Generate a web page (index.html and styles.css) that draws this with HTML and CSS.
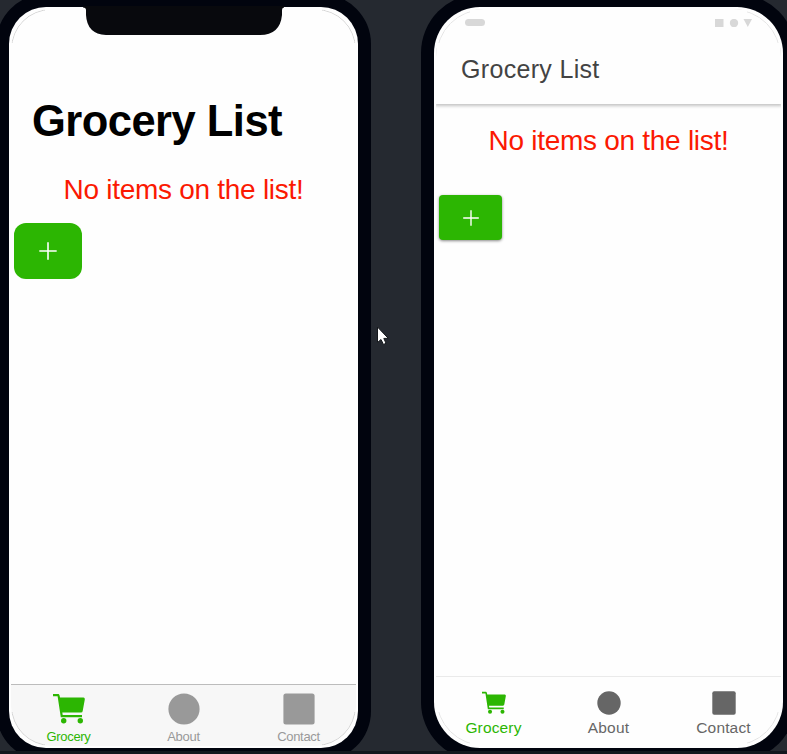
FILE: index.html
```html
<!DOCTYPE html>
<html lang="en">
<head>
<meta charset="utf-8">
<title>Grocery List</title>
<link rel="stylesheet" href="styles.css">
</head>
<body>
<main class="stage">
  <section class="phone ios">
    <div class="notch"><svg width="203" height="28" viewBox="0 0 203 28"><path d="M1-1H202V.6Q200 .8 200 3V8Q198 28 178 28H24Q5 27 4 8V3Q4 .8 1 .6Z" fill="#08090d"/></svg></div>
    <div class="screen">
      <h1 class="title">Grocery List</h1>
      <p class="message">No items on the list!</p>
      <button class="add" aria-label="Add"><svg width="18" height="18" viewBox="0 0 18 18"><path d="M9 .3V17.7M.3 9H17.7" stroke="#fff" stroke-width="1.6"/></svg></button>
      <nav class="tabs">
        <a class="tab active"><svg class="icon" viewBox="0 0 32 32"><path d="M0 1H5.5Q6.5 1 7 4.5H30.5Q32 4.700 31.800 6.500L29.700 18Q29.500 19.500 28 19.500H9.300L9.700 22H29V24.200H7.800L4.600 3.300H0Z"/><circle cx="10.700" cy="27.700" r="2.700"/><circle cx="27.300" cy="27.700" r="2.700"/></svg><span>Grocery</span></a>
        <a class="tab"><svg class="icon" viewBox="0 0 32 32"><circle cx="16" cy="16" r="15.6"/></svg><span>About</span></a>
        <a class="tab"><svg class="icon" viewBox="0 0 32 32"><rect x=".4" y=".4" width="31.2" height="31.2" rx="2.5"/></svg><span>Contact</span></a>
      </nav>
    </div>
  </section>
  <section class="phone android">
    <div class="screen">
      <header class="header">
        <div class="status"><i class="pill"></i><svg width="38" height="8" viewBox="0 0 38 8"><path d="M0 0H8.5V8H0ZM28.5 0H37L32.8 8Z"/><circle cx="19" cy="4" r="4.2"/></svg></div>
        <h1 class="title">Grocery List</h1>
      </header>
      <p class="message">No items on the list!</p>
      <button class="add" aria-label="Add"><svg width="16" height="16" viewBox="0 0 16 16"><path d="M8 .2V15.8M.2 8H15.8" stroke="#fff" stroke-width="1.4"/></svg></button>
      <nav class="tabs">
        <a class="tab active"><svg class="icon" viewBox="0 0 32 32"><path d="M0 1H5.5Q6.5 1 7 4.5H30.5Q32 4.700 31.800 6.500L29.700 18Q29.500 19.500 28 19.500H9.300L9.700 22H29V24.200H7.800L4.600 3.300H0Z"/><circle cx="10.700" cy="27.700" r="2.700"/><circle cx="27.300" cy="27.700" r="2.700"/></svg><span>Grocery</span></a>
        <a class="tab"><svg class="icon" viewBox="0 0 32 32"><circle cx="16" cy="16" r="15.6"/></svg><span>About</span></a>
        <a class="tab"><svg class="icon" viewBox="0 0 32 32"><rect x=".4" y=".4" width="31.2" height="31.2" rx="2.5"/></svg><span>Contact</span></a>
      </nav>
    </div>
  </section>
</main>
<div class="edge"></div>
<svg class="cursor" width="12" height="20" viewBox="0 0 12 20"><path d="M.5 1V16.5L4 13.5L6.5 18.5L9 17.3L6.8 12.4H11.3Z" fill="#fff" stroke="#15181c"/></svg>
</body>
</html>
```
FILE: styles.css
```css
* { box-sizing: border-box; }
body {
  margin: 0;
  height: 754px;
  overflow: hidden;
  position: relative;
  background: #252930;
  font-family: "Liberation Sans", Arial, sans-serif;
}
h1, p { margin: 0; white-space: nowrap; }
.stage { display: flex; gap: 76px; padding: 7px 0 0 9px; }
.phone {
  position: relative;
  flex: none;
  width: 349px;
  height: 741px;
  padding: 2px;
  background: #fefefe;
  box-shadow: 0 0 0 13px #01040e;
}
/* Faint outline where the display glass curves at its corners */
.phone::after {
  content: "";
  position: absolute;
  inset: 2px;
  border: 1px solid #d4d4d4;
  border-radius: 40px;
  pointer-events: none;
  mask:
    linear-gradient(#000 0 0) 0 0 / 34px 34px no-repeat,
    linear-gradient(#000 0 0) 100% 0 / 34px 34px no-repeat,
    linear-gradient(#000 0 0) 0 100% / 34px 34px no-repeat,
    linear-gradient(#000 0 0) 100% 100% / 34px 34px no-repeat;
}
.ios { border-radius: 37px; }
.android { border-radius: 46px; }
.android::after { border-radius: 48px; border-color: #e4e4e4; }
.screen {
  display: flex;
  flex-direction: column;
  height: 100%;
  overflow: hidden;
  background: #fefefe;
}
.ios .screen { border-radius: 40px; }
.android .screen { border-radius: 48px; }
.notch { position: absolute; z-index: 1; top: 0; left: 73px; height: 28px; }
.notch svg { display: block; overflow: visible; }
.message { color: #fb1902; font-size: 28px; line-height: 32px; letter-spacing: -.28px; text-align: center; }
.add {
  display: flex;
  align-items: center;
  justify-content: center;
  padding: 0;
  border: 0;
  background: #2cb602;
}
.tabs { display: flex; margin-top: auto; }
.tab {
  flex: 1;
  display: flex;
  flex-direction: column;
  align-items: center;
}
.icon { display: block; fill: currentColor; }
.ios .title { margin: 86px 0 0 21px; font-size: 43.5px; line-height: 52px; letter-spacing: -.52px; color: #000; }
.ios .message { margin-top: 27px; }
.ios .add { width: 68px; height: 56px; margin: 17px 0 0 3px; border-radius: 12px; }
.ios .tabs { height: 62px; padding-top: 8px; background: #f7f7f7; border-top: 1px solid #bcbcbc; }
.ios .tab { color: #999; font-size: 13px; line-height: 15px; letter-spacing: -.3px; }
.ios .icon { width: 32px; height: 32px; margin-bottom: 4px; }
.header {
  height: 95px;
  flex: none;
  background: #fefefe;
  box-shadow: 0 1px 3px 1px #c4c4c4;
}
.status { display: flex; justify-content: space-between; padding: 10px 28px 0 29px; fill: #d8d8d8; }
.pill { width: 20px; height: 7px; border-radius: 4px; background: #d8d8d8; }
.android .title { margin: 27px 0 0 25px; font-size: 25px; line-height: 30px; font-weight: 400; letter-spacing: .32px; color: #434343; }
.android .message { margin-top: 21px; }
.android .add { width: 63px; height: 45px; margin: 38px 0 0 3px; border-radius: 4px; box-shadow: 0 1px 3px #888; }
.android .tabs { height: 70px; padding-top: 14px; border-top: 1px solid #eaeaea; }
.android .tab { color: #666; font-size: 15.5px; line-height: 18px; letter-spacing: .15px; }
.android .icon { width: 24px; height: 24px; margin-bottom: 4px; }
.tab.active { color: #2cb602; }
.edge { position: absolute; left: 0; right: 0; bottom: 0; height: 3px; background: #12171e; }
.cursor { position: absolute; left: 377px; top: 326px; }
```
